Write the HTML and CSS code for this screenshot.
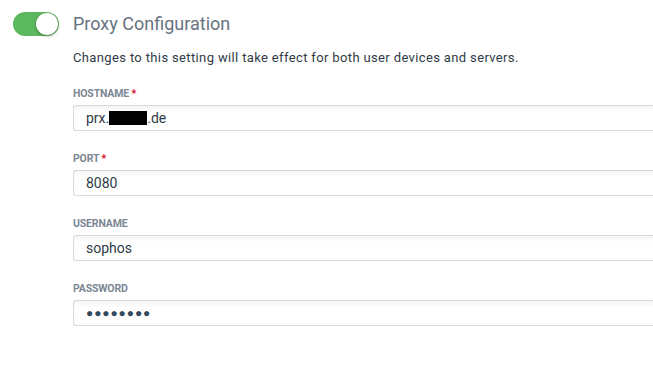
FILE: index.html
```html
<!DOCTYPE html>
<html lang="en">
<head>
    <meta charset="UTF-8">
    <title>Proxy Configuration</title>
    <link rel="stylesheet" href="styles.css">
</head>
<body>
    <div class="proxy-panel">
        <div class="panel-header">
            <label class="toggle on">
                <span class="toggle-knob"></span>
            </label>
            <h2 class="panel-title">Proxy Configuration</h2>
        </div>

        <div class="panel-body">
            <p class="description">Changes to this setting will take effect for both user devices and servers.</p>

            <div class="field">
                <div class="field-label">HOSTNAME <span class="required">*</span></div>
                <div class="text-input">prx.<span class="redacted"></span>.de</div>
            </div>

            <div class="field">
                <div class="field-label">PORT <span class="required">*</span></div>
                <div class="text-input">8080</div>
            </div>

            <div class="field">
                <div class="field-label">USERNAME</div>
                <div class="text-input">sophos</div>
            </div>

            <div class="field">
                <div class="field-label">PASSWORD</div>
                <div class="text-input password">&#9679;&#9679;&#9679;&#9679;&#9679;&#9679;&#9679;&#9679;</div>
            </div>
        </div>
    </div>
</body>
</html>
```

FILE: styles.css
```css
* {
    margin: 0;
    padding: 0;
    box-sizing: border-box;
}

body {
    font-family: Roboto, 'Open Sans', sans-serif;
    background: #ffffff;
    color: #2f3b47;
    overflow: hidden;
}

.proxy-panel {
    padding: 12px 0 0 13px;
    overflow: hidden;
}

.panel-header {
    display: flex;
    align-items: center;
    gap: 14px;
    height: 24px;
}

.toggle {
    position: relative;
    width: 46px;
    height: 24px;
    border-radius: 12px;
    background: #5cb85c;
    flex-shrink: 0;
}

.toggle-knob {
    position: absolute;
    top: 1px;
    right: 1px;
    width: 22px;
    height: 22px;
    border-radius: 50%;
    background: #ffffff;
    box-shadow: 0 1px 3px rgba(0, 0, 0, 0.35);
}

.panel-title {
    font-size: 18px;
    font-weight: 400;
    color: #67727e;
    line-height: 24px;
}

.panel-body {
    padding-left: 60px;
}

.description {
    margin-top: 13px;
    font-size: 13px;
    line-height: 18px;
    letter-spacing: 0.36px;
    color: #2f3b47;
}

.field {
    margin-top: 20px;
}

.field + .field {
    margin-top: 21px;
}

.field-label {
    font-size: 10.5px;
    font-weight: 700;
    line-height: 14px;
    letter-spacing: -0.15px;
    color: #7b8794;
    margin-bottom: 4px;
}

.required {
    color: #d0021b;
}

.text-input {
    width: 600px;
    height: 26px;
    border: 1px solid #d9d9d9;
    border-right: none;
    border-radius: 3px 0 0 3px;
    background: linear-gradient(#f4f4f4, #ffffff 6px);
    padding: 0 12px;
    font-size: 14px;
    line-height: 24px;
    color: #2f3b47;
}

.redacted {
    display: inline-block;
    width: 38px;
    height: 14px;
    background: #000000;
    vertical-align: -2px;
}

.password {
    font-size: 12px;
    letter-spacing: 0.9px;
    color: #34495e;
}
```
